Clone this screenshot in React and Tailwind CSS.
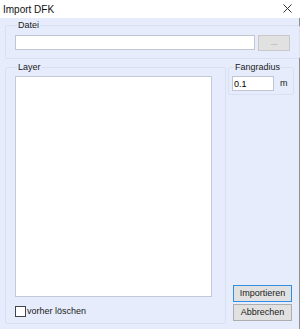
import React from 'react';

function GroupBox({ label, className = '', children }) {
  return (
    <fieldset className={`border border-[#d9e0f2] rounded-[2px] ${className}`}>
      <legend className="ml-[2px] px-[1px] text-[9px] leading-[12px] text-[#1a1a1a]">{label}</legend>
      {children}
    </fieldset>
  );
}

function Button({ children, primary }) {
  return (
    <button
      className={`w-[59px] h-[17px] bg-[#e1e1e1] text-[9px] leading-none text-[#1a1a1a] border ${
        primary ? 'border-[#2f8ee0]' : 'border-[#adadad]'
      }`}
    >
      {children}
    </button>
  );
}

export default function App() {
  return (
    <div
      className="w-[300px] h-[329px] flex flex-col bg-white overflow-hidden"
      style={{ fontFamily: '"Liberation Sans", Arial, sans-serif' }}
    >
      {/* title bar */}
      <div className="h-[18px] flex items-center justify-between pl-[3px] pr-[8px] bg-white">
        <span className="text-[10px] text-[#111]">Import DFK</span>
        <svg width="9" height="9" viewBox="0 0 9 9" className="mt-[-1px]">
          <path d="M0.5 0.5 L8.5 8.5 M8.5 0.5 L0.5 8.5" stroke="#333" strokeWidth="1" />
        </svg>
      </div>

      {/* body */}
      <div className="flex-1 flex flex-col bg-[#e6ecfb] pl-[5px] pr-[5px] pt-[1px] border-r border-[#8e8e8e]">
        <GroupBox label="Datei" className="h-[40px] px-[9px]">
          <div className="flex items-start gap-[3px] mt-[4px]">
            <input className="w-[240px] h-[15px] bg-white border border-[#bfc6d2] outline-none" />
            <button className="w-[32px] h-[16px] bg-[#e1e1e1] border border-[#c8c8c8] text-[8px] leading-none text-[#8a8a8a]">
              ...
            </button>
          </div>
        </GroupBox>

        <div className="flex gap-[2px] mt-[2px] flex-1 pb-[5px]">
          <GroupBox label="Layer" className="w-[221px] px-[9px] flex flex-col">
            <div className="w-[197px] h-[221px] mt-[3px] bg-white border border-[#c3cad6]" />
            <label className="flex items-center gap-[1px] mt-[8px] text-[9px] text-[#1a1a1a]">
              <span className="w-[11px] h-[11px] bg-white border border-[#444]" />
              vorher löschen
            </label>
          </GroupBox>

          <div className="flex flex-col flex-1">
            <GroupBox label="Fangradius" className="h-[34px] px-[3px]">
              <div className="flex items-center mt-[3px]">
                <input
                  defaultValue="0.1"
                  className="w-[42px] h-[15px] bg-white border border-[#bfc6d2] text-[9px] px-[1px] outline-none"
                />
                <span className="ml-[6px] text-[9px] text-[#1a1a1a]">m</span>
              </div>
            </GroupBox>
            <div className="flex-1" />
            <div className="flex flex-col gap-[2px] pl-[5px] mb-[3px]">
              <Button primary>Importieren</Button>
              <Button>Abbrechen</Button>
            </div>
          </div>
        </div>
      </div>
    </div>
  );
}
